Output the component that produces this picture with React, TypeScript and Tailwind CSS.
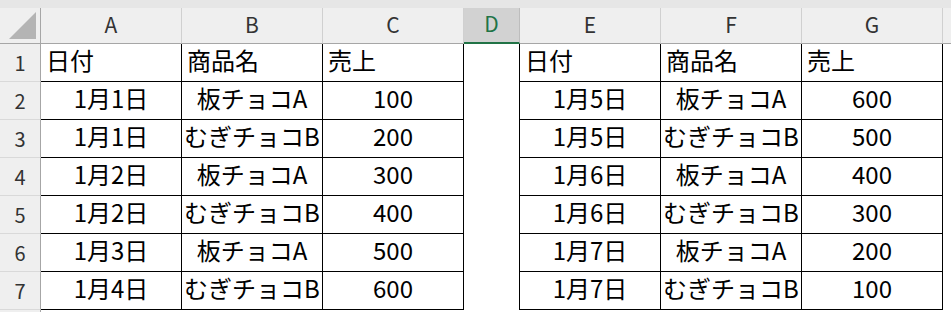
import React from 'react'

const cols = ['A', 'B', 'C', 'D', 'E', 'F', 'G']

const head = ['日付', '商品名', '売上']

const left = [
  ['1月1日', '板チョコA', '100'],
  ['1月1日', 'むぎチョコB', '200'],
  ['1月2日', '板チョコA', '300'],
  ['1月2日', 'むぎチョコB', '400'],
  ['1月3日', '板チョコA', '500'],
  ['1月4日', 'むぎチョコB', '600'],
]

const right = [
  ['1月5日', '板チョコA', '600'],
  ['1月5日', 'むぎチョコB', '500'],
  ['1月6日', '板チョコA', '400'],
  ['1月6日', 'むぎチョコB', '300'],
  ['1月7日', '板チョコA', '200'],
  ['1月7日', 'むぎチョコB', '100'],
]

const font = { fontFamily: '"Noto Sans CJK JP", "Noto Sans", sans-serif' }

function RowHead({ n }: { n: number }) {
  return (
    <div className="flex items-center justify-center bg-[#efefef] border-r border-r-[#a6a6a6] border-b border-b-[#d9d9d9] text-[20px] text-[#333]">
      {n}
    </div>
  )
}

function Cell({ text, isHead }: { text: string; isHead?: boolean }) {
  return (
    <div
      className={`flex items-center whitespace-nowrap overflow-visible border-r border-b border-black bg-white text-[24px] text-black pb-[5px] ${
        isHead ? 'justify-start pl-[5px]' : 'justify-center'
      }`}
    >
      {text}
    </div>
  )
}

export default function App() {
  return (
    <div className="w-[951px] h-[312px] overflow-hidden bg-white" style={font}>
      <div className="h-[8px] bg-[#e6e6e6]" />
      <div className="grid grid-cols-[41px_141px_141px_141px_56px_141px_141px_141px_8px] grid-rows-[36px_repeat(7,38px)_2px]">
        {/* 列見出し */}
        <div className="relative bg-[#efefef] border-r border-r-[#a6a6a6] border-b border-b-[#a6a6a6]">
          <svg className="absolute left-[9px] top-[4px]" width="28" height="28" viewBox="0 0 28 28">
            <polygon points="27,0 27,27 0,27" fill="#b4b4b4" />
          </svg>
        </div>
        {cols.map((c) =>
          c === 'D' ? (
            <div
              key={c}
              className="flex items-center justify-center bg-[#d2d2d2] border-r border-r-[#bdbdbd] border-b-2 border-b-[#217346] text-[21px] text-[#217346] pb-[2px]"
            >
              {c}
            </div>
          ) : (
            <div
              key={c}
              className="flex items-center justify-center bg-[#efefef] border-r border-r-[#d0d0d0] border-b border-b-[#a6a6a6] text-[21px] text-[#333] pb-[2px]"
            >
              {c}
            </div>
          )
        )}
        <div className="bg-[#efefef] border-b border-b-[#a6a6a6]" />

        {/* 1行目 */}
        <RowHead n={1} />
        {head.map((t) => (
          <Cell key={'l' + t} text={t} isHead />
        ))}
        <div className="bg-white border-r border-black" />
        {head.map((t) => (
          <Cell key={'r' + t} text={t} isHead />
        ))}
        <div className="bg-white" />

        {/* データ */}
        {left.map((row, i) => (
          <React.Fragment key={i}>
            <RowHead n={i + 2} />
            {row.map((t, j) => (
              <Cell key={'l' + j} text={t} />
            ))}
            <div className="bg-white border-r border-black" />
            {right[i].map((t, j) => (
              <Cell key={'r' + j} text={t} />
            ))}
            <div className="bg-white" />
          </React.Fragment>
        ))}

        {/* 8行目（一部） */}
        <div className="bg-[#efefef] border-r border-r-[#a6a6a6]" />
        <div className="col-span-8 bg-white" />
      </div>
    </div>
  )
}
